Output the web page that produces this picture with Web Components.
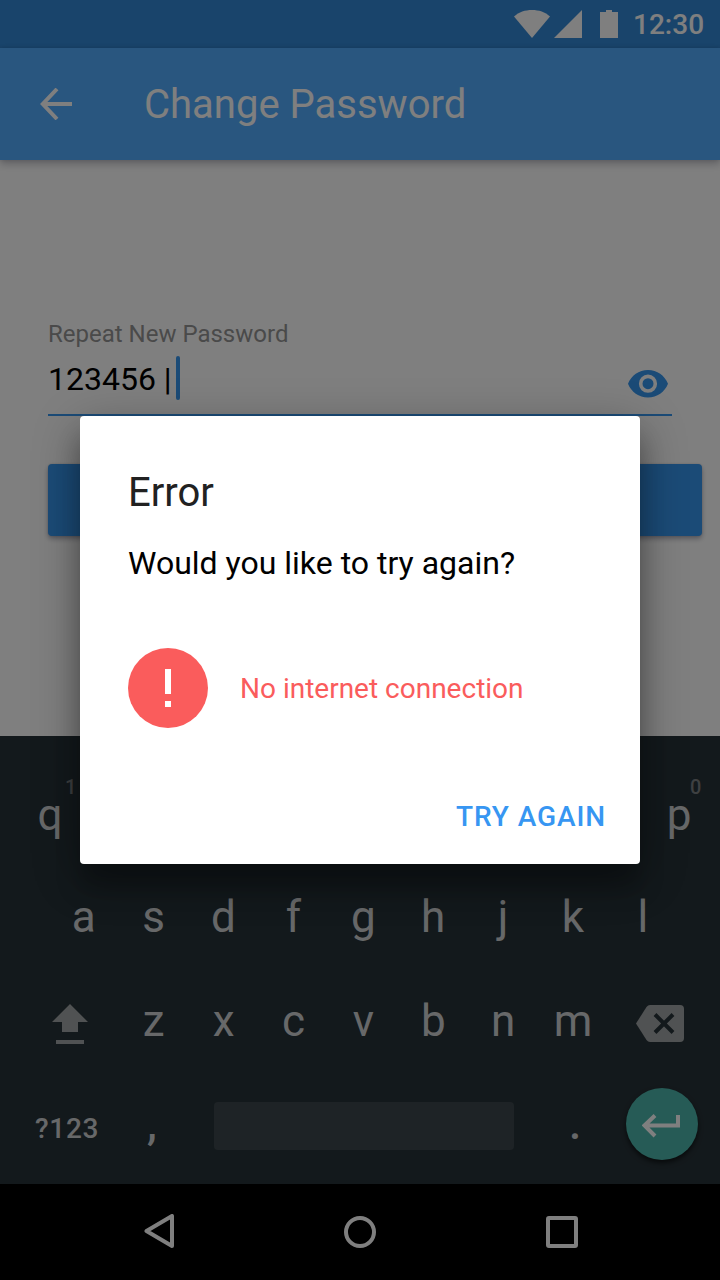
<!DOCTYPE html>
<html lang="en">
<head>
<meta charset="utf-8">
<title>Change Password</title>
<style>
html,body{margin:0;padding:0;width:720px;height:1280px;overflow:hidden;background:#000;font-family:Roboto,sans-serif}
</style>
</head>
<body>
<password-screen></password-screen>
<script>
const define = (name, html) => customElements.define(name, class extends HTMLElement {
  constructor() {
    super();
    const t = document.createElement('template');
    t.innerHTML = html;
    this.attachShadow({mode: 'open'}).append(t.content.cloneNode(true));
  }
});

define('status-bar', `
<style>
:host{display:flex;height:48px;background:#3288d6;color:#fff;align-items:center;justify-content:flex-end;box-sizing:border-box;padding-right:16px;font-size:28px;font-weight:500}
svg{display:block;flex:none}
span{line-height:48px;margin-left:14px;padding-top:2px;width:71px;white-space:nowrap}
</style>
<svg width="106" height="48" viewBox="0 0 106 48" fill="#fff">
<path d="M1 16.500C6 12 12 10 19 10s13 2 18 6.500L19 38z"/>
<path d="M41 38L69 10V38z"/>
<path d="M87 12h6V10h6v2h6V38H87z"/>
</svg><span>12:30</span>`);

define('app-bar', `
<style>
:host{display:flex;height:112px;background:#52acfe;color:#fff;align-items:center;box-sizing:border-box;padding-left:40px;position:relative;box-shadow:0 4px 8px rgba(0,0,30,.24),0 0 4px rgba(0,0,30,.12)}
svg{display:block;flex:none}
h1{margin:0 0 0 72px;padding-top:2px;font-size:40px;font-weight:400;line-height:110px}
</style>
<svg width="32" height="32" viewBox="0 0 32 32"><path d="M32 16H4M17 1L2.800 16 17 31" fill="none" stroke="#fff" stroke-width="4"/></svg>
<h1><slot></slot></h1>`);

define('text-field', `
<style>
:host{display:flex;flex-direction:column;width:624px;height:98px;border-bottom:2px solid #3696ee;box-sizing:border-box}
label{font-size:24px;line-height:32px;color:#949494}
.row{display:flex;height:48px;margin-top:5px;align-items:center;justify-content:space-between}
.value{display:flex;align-items:center;font-size:32px;line-height:48px;color:#000;white-space:pre}
i{display:block;width:4px;height:44px;border-radius:2px;background:#3696ee;margin:0 0 2px 4px}
svg{display:block;margin:9px 4px 0 0}
</style>
<label><slot name="label"></slot></label>
<div class="row"><div class="value"><slot></slot><i></i></div>
<svg width="40" height="28" viewBox="2 9 40 28"><path d="M22 9C12.900 9 5.200 14.600 2 22.700 5.200 30.800 12.900 36.400 22 36.400S38.800 30.800 42 22.700C38.800 14.600 31.100 9 22 9zm0 22.800a9.100 9.100 0 1 1 0-18.200 9.100 9.100 0 0 1 0 18.200zm0-14.600a5.500 5.500 0 1 0 0 11 5.500 5.500 0 0 0 0-11z" fill="#3696ee"/></svg>
</div>`);

define('raised-button', `
<style>:host{display:block;width:654px;height:72px;border-radius:4px;background:#3696ee;box-shadow:0 3px 5px rgba(0,0,40,.3),0 0 2px rgba(0,0,40,.15)}</style>`);

define('key-cap', `
<style>
:host{display:flex;width:69.9px;align-items:center;justify-content:center;font-size:44px;color:#cfd1d2;position:relative;flex:none}
::slotted(sup){position:absolute;left:var(--hint-left,50px);top:11px;font-size:20px;font-weight:500;line-height:24px;color:#7c8083}
</style><slot></slot>`);

define('soft-keyboard', `
<style>
:host{display:grid;grid-template-rows:102px 102px 106px 100px;height:448px;box-sizing:border-box;padding-top:28px;background:#273238}
.row{display:flex}
.r1{padding-left:15px;justify-content:space-between;padding-right:6px}
.r2{padding-left:48.800px}
.r3{align-items:stretch}
.r4{align-items:center}
.r3 svg{align-self:center;display:block;flex:none}
.mode{font-size:28px;font-weight:500;width:84px;margin-left:35px;letter-spacing:.7px;color:#cfd1d2;margin-top:8px}
.space{width:300px;height:48px;border-radius:4px;background:#3d474c;margin:4px 0 0 27px}
.enter{width:72px;height:72px;border-radius:50%;background:#4db6ac;display:grid;place-items:center;margin-left:16px;box-shadow:0 3px 5px rgba(0,0,0,.6)}
.enter svg{display:block;margin:3px 2px 0 0}
.dot{font-weight:500}
</style>
<div class="row r1"><key-cap>q<sup>1</sup></key-cap><key-cap style="--hint-left:46px">p<sup>0</sup></key-cap></div>
<div class="row r2"><key-cap>a</key-cap><key-cap>s</key-cap><key-cap>d</key-cap><key-cap>f</key-cap><key-cap>g</key-cap><key-cap>h</key-cap><key-cap>j</key-cap><key-cap>k</key-cap><key-cap>l</key-cap></div>
<div class="row r3"><svg width="36" height="40" viewBox="0 0 36 40" fill="#a1a5a6" style="margin:6px 30.8px 0 52px"><path d="M18 0L36 18H26V28H10V18H0zM4 36H32V40H4z"/></svg><key-cap>z</key-cap><key-cap>x</key-cap><key-cap>c</key-cap><key-cap>v</key-cap><key-cap>b</key-cap><key-cap>n</key-cap><key-cap>m</key-cap><svg width="48" height="37" viewBox="0 0 48 37" style="margin:5px 0 0 27.900px"><path d="M14 0H44Q48 0 48 4V33Q48 37 44 37H14Q12 37 10.500 35L0 18.500 10.500 2Q12 0 14 0z" fill="#a1a5a6"/><path d="M19 9.500l18 18M37 9.500l-18 18" stroke="#273238" stroke-width="4"/></svg></div>
<div class="row r4"><span class="mode">?123</span><key-cap class="dot" style="margin-left:-2px">,</key-cap><div class="space"></div><key-cap class="dot" style="margin-left:26.200px">.</key-cap><div class="enter"><svg width="38" height="24" viewBox="0 0 38 24" fill="none" stroke="#fff" stroke-width="4"><path d="M36 1V11.500H4M13 1.500L2.500 11.500 13 22"/></svg></div></div>`);

define('nav-bar', `
<style>:host{display:flex;height:96px;background:#000;align-items:center;padding-left:144px;box-sizing:border-box}svg{display:block}</style>
<svg width="434" height="36" viewBox="144 1214 434 36" fill="none" stroke="#fff" stroke-width="4" stroke-linejoin="round"><path d="M172 1216V1246L146.500 1231z"/><circle cx="360" cy="1232" r="14"/><rect x="548" y="1218" width="28" height="28" rx="1"/></svg>`);

define('alert-dialog', `
<style>
:host{display:flex;flex-direction:column;box-sizing:border-box;width:560px;height:448px;padding:53px 34px 23px 48px;background:#fff;border-radius:4px;box-shadow:0 24px 24px rgba(0,0,0,.24),0 12px 48px rgba(0,0,0,.32)}
h2{margin:0;font-size:40px;line-height:48px;font-weight:400;color:#212121}
p{margin:0;font-size:32px;line-height:40px;color:#000;margin-top:26px}
.notice{display:flex;align-items:center;gap:32px;margin-top:65px;font-size:28px;color:#fa5c5c}
.notice svg{display:block}
button{font:500 28px/48px Roboto,sans-serif;color:#3796f2;border:0;background:none;padding:0;align-self:flex-end;margin-top:65px;letter-spacing:.9px}
</style>
<h2><slot name="title"></slot></h2>
<p><slot></slot></p>
<div class="notice"><svg width="80" height="80" viewBox="0 0 80 80"><circle cx="40" cy="40" r="40" fill="#fa5c5c"/><path d="M37 21h6v25h-6zM37 53h6v6h-6z" fill="#fff"/></svg><slot name="notice"></slot></div>
<button><slot name="action"></slot></button>`);

define('password-screen', `
<style>
:host{display:grid;grid-template-rows:auto auto 1fr auto auto;width:720px;height:1280px;position:relative;overflow:hidden}
main{background:#fff;padding:158px 0 0 48px}
text-field{margin-bottom:48px}
.scrim{position:absolute;inset:0;background:rgba(0,0,0,.5);display:grid;justify-content:center;align-content:start;padding-top:416px}
</style>
<status-bar></status-bar>
<app-bar>Change Password</app-bar>
<main><text-field><span slot="label">Repeat New Password</span>123456 |</text-field><raised-button></raised-button></main>
<soft-keyboard></soft-keyboard>
<nav-bar></nav-bar>
<div class="scrim"><alert-dialog><span slot="title">Error</span>Would you like to try again?<span slot="notice">No internet connection</span><span slot="action">TRY AGAIN</span></alert-dialog></div>`);
</script>
</body>
</html>
